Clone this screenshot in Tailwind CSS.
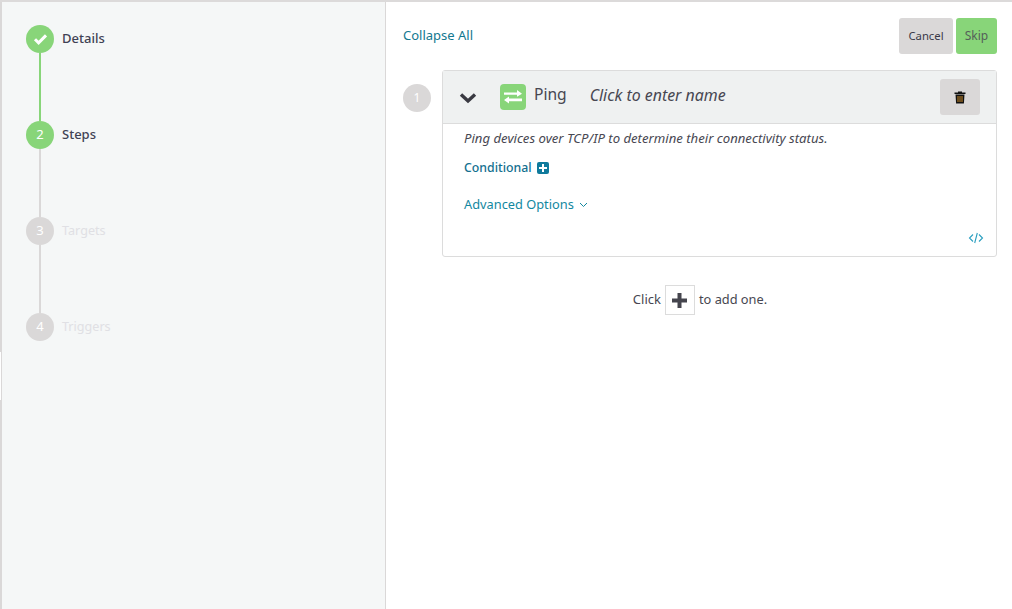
<!DOCTYPE html>
<html>
<head>
<meta charset="utf-8">
<script src="https://cdn.jsdelivr.net/npm/@tailwindcss/browser@4"></script>
</head>
<body class="m-0 bg-white font-['Noto_Sans',sans-serif] text-[13px] text-[#474751] overflow-hidden">
<div class="relative w-[1012px] h-[609px] flex flex-col">
  <div class="absolute left-0 top-[352px] w-[1px] h-[48px] bg-white"></div>
  <div class="h-[2px] bg-[#dcdada] shrink-0"></div>
  <div class="flex flex-1 min-h-0">
    <aside class="w-[386px] shrink-0 bg-[#f5f7f7] border-l-2 border-r border-[#dad8d8] pl-[24px] pt-[23px]">
      <div class="flex h-[96px]">
        <div class="w-[28px] flex flex-col items-center">
          <div class="w-[28px] h-[28px] rounded-full bg-[#88d579] flex items-center justify-center shrink-0">
            <svg width="15" height="12" viewBox="0 0 15 12"><path d="M2 6.200l3.600 3.600L13 2.400" fill="none" stroke="#fff" stroke-width="3"/></svg>
          </div>
          <div class="w-[2px] flex-1 bg-[#88d579]"></div>
        </div>
        <div class="ml-[8px] h-[28px] leading-[26px] font-medium text-[#3f4254]">Details</div>
      </div>
      <div class="flex h-[96px]">
        <div class="w-[28px] flex flex-col items-center">
          <div class="w-[28px] h-[28px] rounded-full bg-[#88d579] flex items-center justify-center shrink-0 text-white text-[13px]">2</div>
          <div class="w-[2px] flex-1 bg-[#dad8d8]"></div>
        </div>
        <div class="ml-[8px] h-[28px] leading-[26px] font-medium text-[#3f4254]">Steps</div>
      </div>
      <div class="flex h-[96px]">
        <div class="w-[28px] flex flex-col items-center">
          <div class="w-[28px] h-[28px] rounded-full bg-[#dad8d8] flex items-center justify-center shrink-0 text-white text-[13px]">3</div>
          <div class="w-[2px] flex-1 bg-[#dad8d8]"></div>
        </div>
        <div class="ml-[8px] h-[28px] leading-[28px] text-[12.600px] text-[#e0e0e4]">Targets</div>
      </div>
      <div class="flex">
        <div class="w-[28px] h-[28px] rounded-full bg-[#dad8d8] flex items-center justify-center shrink-0 text-white text-[13px]">4</div>
        <div class="ml-[8px] h-[28px] leading-[28px] text-[12.600px] text-[#e0e0e4]">Triggers</div>
      </div>
    </aside>
    <main class="flex-1 min-w-0 pl-[17px] pr-[15px] pt-[16px]">
      <div class="flex items-center justify-between h-[36px]">
        <span class="text-[#13788f] text-[13px]">Collapse All</span>
        <div class="flex gap-[3px] text-[12px]">
          <div class="w-[54px] h-[36px] rounded-[3px] bg-[#dad8d8] flex items-center justify-center text-[11.300px] text-[#3a3a48]">Cancel</div>
          <div class="w-[41px] h-[36px] rounded-[3px] bg-[#88d579] flex items-center justify-center text-[#55605a]">Skip</div>
        </div>
      </div>
      <div class="flex mt-[16px]">
        <div class="w-[28px] h-[28px] mt-[14px] rounded-full bg-[#dad8d8] text-white flex items-center justify-center text-[12px] shrink-0">1</div>
        <div class="ml-[11px] flex-1 h-[187px] border border-[#dcdcdc] rounded-[3px] flex flex-col">
          <div class="h-[53px] bg-[#eff1f1] border-b border-[#dcdcdc] flex items-center pl-[16px] pr-[16px] shrink-0">
            <svg width="18" height="12" viewBox="0 0 18 12" class="mt-[2px]"><path d="M2 2.500l7 6.500 7-6.500" fill="none" stroke="#3a3a42" stroke-width="3.400"/></svg>
            <div class="ml-[23px] -mt-[1px] w-[26px] h-[26px] rounded-[4px] bg-[#88d579] flex items-center justify-center">
              <svg width="20" height="16" viewBox="0 0 20 16" fill="#fff"><path d="M1 3.400h13V1l5 3.800-5 3V5.800H1z"/><path d="M19 9.400H6V7.400L1 11l5 3.600V12.200h13z"/></svg>
            </div>
            <span class="ml-[8px] text-[15.600px] -mt-[5px]">Ping</span>
            <span class="ml-[23px] text-[15.900px] italic -mt-[3px]">Click to enter name</span>
            <div class="ml-auto w-[40px] h-[36px] rounded-[3px] bg-[#dad8d8] flex items-center justify-center">
              <svg width="12" height="13" viewBox="0 0 12 13"><path d="M4 1.500V.5h4v1h3.500V3H.5V1.500z" fill="#111"/><path d="M1.500 3.500h9l-.6 9H2.100z" fill="#111"/><path d="M3.500 5h1v6h-1zM5.500 5h1v6h-1zM7.500 5h1v6h-1z" fill="#c98a2b"/></svg>
            </div>
          </div>
          <div class="flex-1 pl-[21px] pr-[12px] relative">
            <p class="italic text-[13.150px] mt-[5px] leading-[18px]">Ping devices over TCP/IP to determine their connectivity status.</p>
            <div class="flex items-center mt-[12px] h-[18px]">
              <span class="text-[#13708f] text-[12.300px] font-medium">Conditional</span>
              <span class="ml-[5px] w-[12px] h-[12px] rounded-[2px] bg-[#0f7a9c] flex items-center justify-center">
                <svg width="8" height="8" viewBox="0 0 8 8"><path d="M3 0h2v3h3v2H5v3H3V5H0V3h3z" fill="#fff"/></svg>
              </span>
            </div>
            <div class="flex items-center mt-[19px] h-[18px] text-[#13889f] text-[12.800px]">
              <span>Advanced Options</span>
              <svg class="ml-[5px]" width="9" height="6" viewBox="0 0 9 6"><path d="M1 1l3.500 3.500L8 1" fill="none" stroke="#13889f" stroke-width="1"/></svg>
            </div>
            <div class="flex justify-end mt-[18px]">
              <svg width="16" height="12" viewBox="0 0 16 12" fill="none" stroke="#2b9fc0" stroke-width="1.100"><path d="M5 2.500L1.500 6 5 9.500M11 2.500L14.500 6 11 9.500M9.300 1L6.700 11"/></svg>
            </div>
          </div>
        </div>
      </div>
      <div class="flex items-center justify-center mt-[27px] h-[32px]">
        <span>Click</span>
        <div class="mx-[4px] w-[30px] h-[30px] border border-[#dcdcdc] flex items-center justify-center">
          <svg width="15" height="15" viewBox="0 0 15 15"><path d="M5.500 0h4v5.500H15v4H9.500V15h-4V9.500H0v-4h5.500z" fill="#45454d"/></svg>
        </div>
        <span class="text-[12.800px]">to add one.</span>
      </div>
    </main>
  </div>
</div>
</body>
</html>
